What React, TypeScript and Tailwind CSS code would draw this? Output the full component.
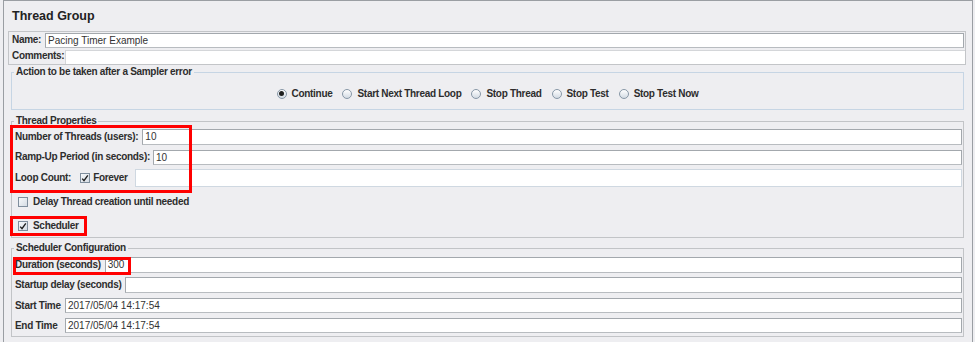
import type { ReactNode } from "react";

const Label = ({ children, className = "" }: { children: ReactNode; className?: string }) => (
  <span
    className={`text-[10px] font-bold tracking-[-0.3px] leading-[12px] text-[#2d2d2d] whitespace-nowrap ${className}`}
  >
    {children}
  </span>
);

const Field = ({ value = "", className = "" }: { value?: string; className?: string }) => (
  <div
    className={`flex-1 bg-white border border-[#a3a8ad] border-b-[#b8bcc0] pl-[2px] text-[10px] leading-[13px] text-[#333] whitespace-nowrap ${className}`}
  >
    {value}
  </div>
);

const Check = ({ checked = false }: { checked?: boolean }) => (
  <span className="w-[10px] h-[10px] shrink-0 border border-[#7f8e9d] bg-gradient-to-br from-[#f7f9fb] to-[#d5dce4] flex items-center justify-center">
    {checked && (
      <svg width="8" height="8" viewBox="0 0 8 8">
        <path d="M1.2 4.6 L3 6.6 L6.8 1.4" stroke="#1e1e1e" strokeWidth="1.4" fill="none" />
      </svg>
    )}
  </span>
);

const Radio = ({ checked = false, label }: { checked?: boolean; label: string }) => (
  <div className="flex items-center gap-[5px]">
    <span className="w-[10px] h-[10px] rounded-full border border-[#8797a7] bg-gradient-to-b from-white to-[#d3dbe3] flex items-center justify-center">
      {checked && <span className="w-[5px] h-[5px] rounded-full bg-[#1f1f1f]" />}
    </span>
    <Label>{label}</Label>
  </div>
);

const Legend = ({ children }: { children: ReactNode }) => (
  <legend className="ml-[2px] px-[2px] text-[10px] font-bold tracking-[-0.3px] leading-[12px] text-[#2d2d2d]">
    {children}
  </legend>
);

export default function App() {
  return (
    <div className="w-[975px] h-[342px] bg-[#eeeef1] pl-[3px] pr-[2px] overflow-hidden font-['Liberation_Sans',Arial,sans-serif]">
      <div className="h-full border-l border-t border-r border-[#9a9ea3] pl-[4px] pr-[6px]">
        {/* title */}
        <div className="mt-[8px] mb-[7px] ml-[4px] text-[12.5px] leading-[15px] font-bold text-[#222]">
          Thread Group
        </div>

        {/* name / comments */}
        <div className="border border-[#c3c5c8]">
          <div className="flex items-center h-[16px] pl-[3px] pr-[1px]">
            <Label>Name:</Label>
            <Field value="Pacing Timer Example" className="ml-[4px] h-[15px]" />
          </div>
          <div className="flex h-[16px] pl-[3px]">
            <Label className="self-center">Comments:</Label>
            <div className="flex-1 ml-[1px] mt-[2px] bg-white border-t border-l border-[#d4d6d9]" />
          </div>
        </div>

        {/* sampler error */}
        <fieldset className="mt-[1px] ml-[3px] mr-[2px] border border-[#c6d5e4]">
          <Legend>Action to be taken after a Sampler error</Legend>
          <div className="h-[31px] flex items-center justify-center gap-[10px]">
            <Radio checked label="Continue" />
            <Radio label="Start Next Thread Loop" />
            <Radio label="Stop Thread" />
            <Radio label="Stop Test" />
            <Radio label="Stop Test Now" />
          </div>
        </fieldset>

        {/* thread properties */}
        <fieldset className="mt-[5px] ml-[3px] mr-[2px] border border-[#c2c4c7] pb-[3px]">
          <Legend>Thread Properties</Legend>
          <div className="pl-[3px] pr-[1px]">
            <div className="relative mt-[2px]">
              <div className="flex items-center h-[16px] gap-[4px]">
                <Label>Number of Threads (users):</Label>
                <Field value="10" className="h-[16px]" />
              </div>
              <div className="flex items-center h-[16px] gap-[3px] mt-[4px]">
                <Label>Ramp-Up Period (in seconds):</Label>
                <Field value="10" className="h-[15px]" />
              </div>
              <div className="flex items-center h-[18px] mt-[4px]">
                <Label>Loop Count:</Label>
                <span className="ml-[9px]">
                  <Check checked />
                </span>
                <Label className="ml-[3px]">Forever</Label>
                <div className="flex-1 h-[18px] ml-[7px] bg-white border border-[#cfd8e1]" />
              </div>
              <div className="absolute left-[-5px] top-[-4px] w-[182px] h-[68px] border-[3px] border-[#ff0000] pointer-events-none" />
            </div>
            <div className="flex items-center h-[16px] mt-[7px] pl-[3px] gap-[5px]">
              <Check />
              <Label>Delay Thread creation until needed</Label>
            </div>
            <div className="relative flex items-center h-[16px] mt-[8px] pl-[3px] gap-[5px]">
              <Check checked />
              <Label>Scheduler</Label>
              <div className="absolute left-[-5px] top-[-2px] w-[77px] h-[20px] border-[3px] border-[#ff0000] pointer-events-none" />
            </div>
          </div>
        </fieldset>

        {/* scheduler configuration */}
        <fieldset className="mt-[4px] ml-[3px] mr-[2px] border border-[#c2c4c7] pb-[3px]">
          <Legend>Scheduler Configuration</Legend>
          <div className="pl-[3px] pr-[1px]">
            <div className="relative flex items-center h-[16px] mt-[3px] gap-[4px]">
              <Label>Duration (seconds)</Label>
              <Field value="300" className="h-[16px]" />
              <div className="absolute left-[-2px] top-0 w-[118px] h-[18px] border-[3px] border-[#ff0000] pointer-events-none" />
            </div>
            <div className="flex items-center h-[16px] mt-[4px] gap-[4px]">
              <Label>Startup delay (seconds)</Label>
              <Field className="h-[16px]" />
            </div>
            <div className="flex items-center h-[15px] mt-[5px]">
              <Label className="w-[50px]">Start Time</Label>
              <Field value="2017/05/04 14:17:54" className="h-[15px]" />
            </div>
            <div className="flex items-center h-[15px] mt-[5px]">
              <Label className="w-[50px]">End Time</Label>
              <Field value="2017/05/04 14:17:54" className="h-[15px]" />
            </div>
          </div>
        </fieldset>
      </div>
    </div>
  );
}
